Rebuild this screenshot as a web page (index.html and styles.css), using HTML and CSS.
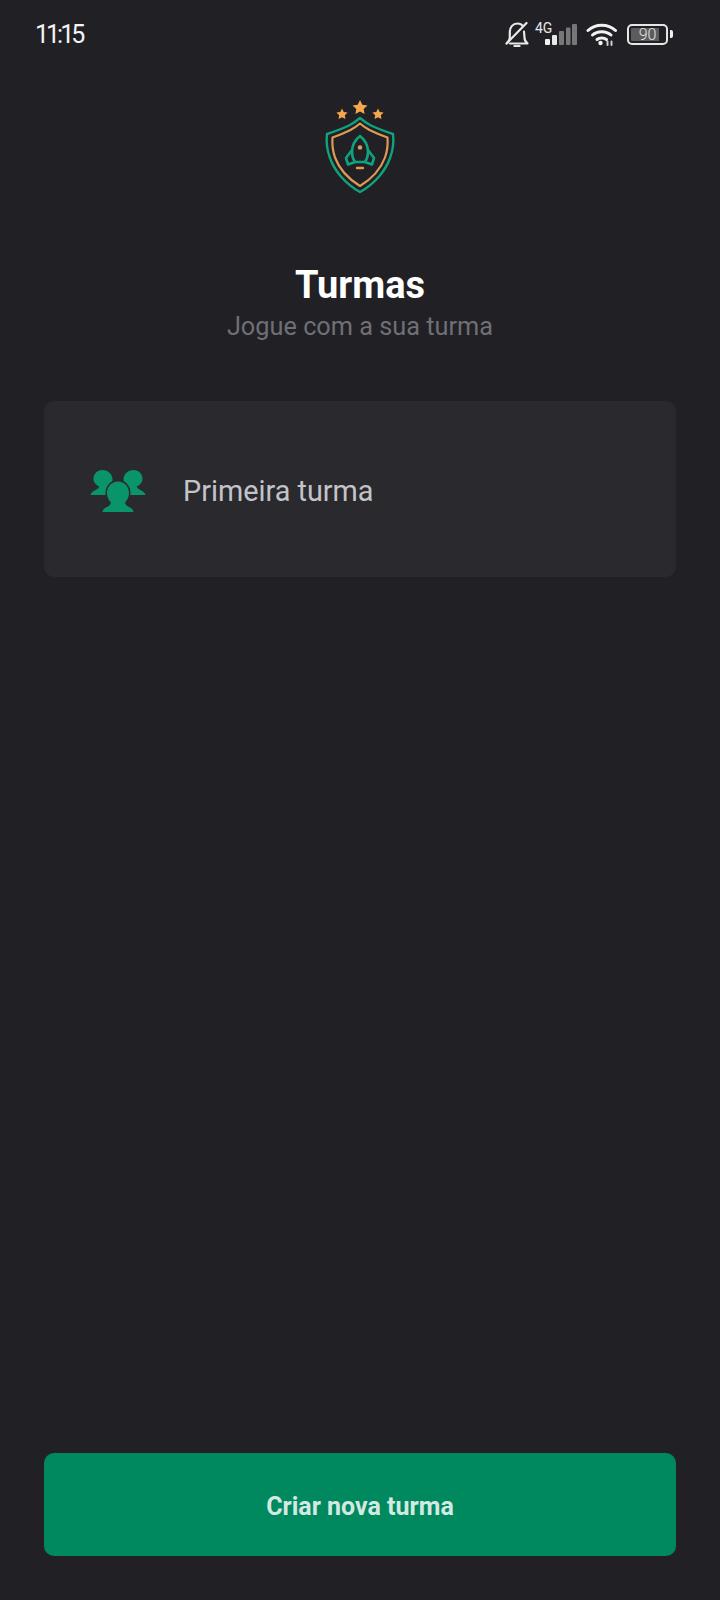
FILE: index.html
```html
<!DOCTYPE html>
<html lang="en">
<head>
    <meta charset="UTF-8">
    <meta name="viewport" content="width=device-width, initial-scale=1.0">
    <title>Turmas</title>
    <link rel="stylesheet" href="styles.css">
</head>
<body>
    <!-- Status bar -->
    <div class="status-bar">
        <span class="clock">11:15</span>
        <div class="status-icons">
            <svg class="icon-bell" width="26" height="26" viewBox="0 0 26 26" fill="none" stroke="#e8e8e8" stroke-width="2.2" stroke-linecap="round" stroke-linejoin="round">
                <path d="M2.500 22.500c2-1.500 3.300-3.500 3.300-6V11c0-5 3.200-8.500 7.500-8.500 2.500 0 4.500 1 5.700 2.700"/>
                <path d="M6 22.500h17.500c-2-1.500-3-3.500-3-6l-.5-6"/>
                <path d="M10.500 25h5"/>
                <path d="M22.500 2 4 21"/>
            </svg>
            <div class="signal">
                <span class="net">4G</span>
                <svg width="32" height="22" viewBox="0 0 32 22">
                    <rect x="0" y="15" width="5" height="6" rx="1" fill="#f2f2f2"/>
                    <rect x="7" y="11" width="5" height="10" rx="1" fill="#e8e8e8"/>
                    <rect x="14" y="7" width="5" height="14" rx="1" fill="#77777a"/>
                    <rect x="21" y="3.500" width="4.500" height="17.500" rx="1" fill="#77777a"/>
                    <rect x="27" y="0" width="5" height="21" rx="1" fill="#77777a"/>
                </svg>
            </div>
            <svg class="icon-wifi" width="32" height="24" viewBox="0 0 32 24" fill="none" stroke="#f2f2f2" stroke-width="3" stroke-linecap="round">
                <path d="M2 8.500c7.500-7 20-7 27.500 0"/>
                <path d="M6.500 13c5-4.500 13.500-4.500 18.500 0"/>
                <path d="M11 17.500c2.500-2 7-2 9.500 0"/>
                <circle cx="14.500" cy="21" r="2.200" fill="#f2f2f2" stroke="none"/>
                <path d="M21.500 23v-3.500M25.500 23v-3.500" stroke-width="2" stroke="#cfcfcf"/>
            </svg>
            <div class="battery">
                <div class="battery-body"><span class="battery-level">90</span></div>
                <div class="battery-nub"></div>
            </div>
        </div>
    </div>

    <!-- Logo -->
    <div class="logo">
        <svg width="72" height="100" viewBox="324 96 72 100" fill="none">
            <path fill="#f5a74b" d="M360 100l2.300 4.700 5.200.7-3.800 3.600.9 5.100-4.600-2.500-4.600 2.500.9-5.100-3.800-3.600 5.200-.7z"/>
            <path fill="#f5a74b" d="M342 108.500l1.700 3.500 3.900.5-2.800 2.700.7 3.800-3.500-1.800-3.500 1.800.7-3.800-2.800-2.700 3.900-.5z"/>
            <path fill="#f5a74b" d="M378 108.500l1.700 3.500 3.900.5-2.800 2.700.7 3.800-3.500-1.800-3.500 1.800.7-3.800-2.800-2.700 3.900-.5z"/>
            <path stroke="#0fa37c" stroke-width="2.400" stroke-linejoin="round" d="M360 118c3.500 3 6 5 11 7.500 6 2.800 13 5.500 22 8.500 1 8 0 16-3 24-4 11.500-14 25-30 34-16-9-26-22.500-30-34-3-8-4-16-3-24 9-3 16-5.700 22-8.500 5-2.500 7.500-4.500 11-7.500z"/>
            <path stroke="#dd9a55" stroke-width="2.200" stroke-linejoin="round" d="M360 123.500c3 2.500 5 4 9.500 6.500 5 2.500 11 5 18 7.500.5 7 0 13-2.500 20-3.500 9.500-12 20.500-25 28.500-13-8-21.500-19-25-28.500-2.500-7-3-13-2.500-20 7-2.500 13-5 18-7.500 4.500-2.500 6.500-4 9.500-6.500z"/>
            <path stroke="#0fa37c" stroke-width="2.600" stroke-linejoin="round" d="M360 136c5 4 8 10 8 16 0 4-1 7-3 10h-10c-2-3-3-6-3-10 0-6 3-12 8-16z"/>
            <path stroke="#0fa37c" stroke-width="2.600" stroke-linejoin="round" stroke-linecap="round" d="M352 150l-6 8 2 6.500 7-2.500M368 150l6 8-2 6.500-7-2.500"/>
            <circle cx="360" cy="147.500" r="2.300" fill="#dd9a55"/>
            <path stroke="#dd9a55" stroke-width="2.400" stroke-linecap="round" d="M357 168h6"/>
        </svg>
    </div>

    <h1 class="title">Turmas</h1>
    <p class="subtitle">Jogue com a sua turma</p>

    <!-- Lista de turmas -->
    <div class="group-card">
        <svg class="group-icon" width="56" height="42" viewBox="0 0 56 42" fill="#09946a">
            <path d="M12.500 0C18 0 22.500 4 22.500 9.500c0 3-1.200 5.500-3.200 7.500.3 1.800 1.500 3 3.200 4l3 4H.500c.8-2.700 3-4.200 5.500-5.300 1.800-.8 2.800-1.700 3.200-3.200-3-1.500-5.700-3.900-5.700-7.500C3.500 4 7 0 12.500 0z"/>
            <path d="M43.500 0C38 0 33.500 4 33.500 9.500c0 3 1.200 5.500 3.200 7.500-.3 1.800-1.500 3-3.200 4l-3 4h25c-.8-2.700-3-4.200-5.500-5.300-1.800-.8-2.800-1.700-3.200-3.200 3-1.500 5.700-3.900 5.700-7.500C52.500 4 49 0 43.500 0z"/>
            <path stroke="#29292e" stroke-width="3" paint-order="stroke" d="M28 11.500c6.300 0 11 5 11 11.500 0 4.300-1.800 7.500-4 9.500.5 2 1.500 3.200 3.700 4.200 2.800 1.200 4.500 2.800 4.800 5.300h-31c.3-2.500 2-4.100 4.800-5.300 2.200-1 3.200-2.200 3.700-4.200-2.200-2-4-5.200-4-9.500 0-6.500 4.700-11.500 11-11.500z"/>
        </svg>
        <span class="group-name">Primeira turma</span>
    </div>

    <div class="spacer"></div>

    <button class="create-btn">Criar nova turma</button>
</body>
</html>
```

FILE: styles.css
```css
html, body {
    height: 100%;
}
body {
    margin: 0;
    height: 1600px;
    background-color: #212025;
    font-family: Roboto, sans-serif;
    display: flex;
    flex-direction: column;
    overflow: hidden;
}
.status-bar {
    height: 68px;
    padding: 0 47px 0 35px;
    display: flex;
    justify-content: space-between;
    align-items: center;
}
.clock {
    color: #f4f4f4;
    font-size: 25px;
    letter-spacing: -3px;
}
.status-icons {
    display: flex;
    align-items: center;
    gap: 9px;
}
.icon-bell {
    margin-right: -4px;
}
.signal {
    display: flex;
    align-items: flex-end;
    position: relative;
    width: 42px;
    height: 24px;
    justify-content: flex-end;
}
.net {
    position: absolute;
    left: 0;
    top: -2px;
    color: #e8e8e8;
    font-size: 14px;
}
.battery {
    display: flex;
    align-items: center;
    gap: 2px;
}
.battery-body {
    width: 41px;
    height: 21px;
    border: 2px solid #e6e6e6;
    border-radius: 5px;
    padding: 2px;
    box-sizing: border-box;
    display: flex;
}
.battery-level {
    flex: 1;
    background: linear-gradient(90deg, #5c5c5f 85%, transparent 85%);
    border-radius: 1px;
    color: #e4e4e4;
    font-size: 16px;
    font-weight: 300;
    line-height: 13px;
    text-align: center;
}
.battery-nub {
    width: 3px;
    height: 8px;
    background-color: #f0f0f0;
    border-radius: 0 2px 2px 0;
}
.logo {
    display: flex;
    justify-content: center;
    margin-top: 28px;
}
.title {
    margin: 66px 0 0;
    text-align: center;
    color: #fff;
    font-size: 38px;
    line-height: 46px;
    font-weight: 700;
}
.subtitle {
    margin: 3px 0 0;
    text-align: center;
    color: #6f6f76;
    font-size: 25.300px;
    line-height: 32px;
}
.group-card {
    margin: 58px 44px 0;
    height: 176px;
    border-radius: 10px;
    background-color: #29292e;
    display: flex;
    align-items: center;
    gap: 37px;
    padding-left: 46px;
}
.group-icon {
    margin-top: 3px;
}
.group-name {
    color: #c4c4c8;
    font-size: 28.800px;
    padding-top: 4px;
}
.spacer {
    flex: 1;
}
.create-btn {
    margin: 0 44px 44px;
    height: 103px;
    padding: 4px 0 0;
    border: none;
    border-radius: 10px;
    background-color: #00885f;
    color: #d3e9e1;
    font-family: Roboto, sans-serif;
    font-size: 25px;
    font-weight: 700;
    cursor: pointer;
}
```
